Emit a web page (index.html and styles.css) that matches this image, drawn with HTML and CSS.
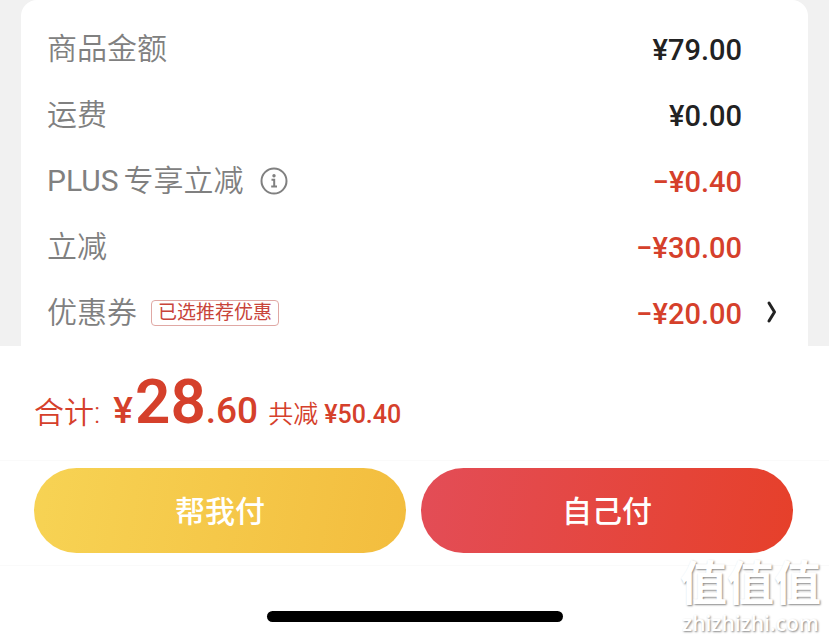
FILE: index.html
```html
<!DOCTYPE html>
<html lang="zh-CN">
<head>
  <meta charset="UTF-8">
  <meta name="viewport" content="width=device-width, initial-scale=1">
  <title>支付</title>
  <link rel="stylesheet" href="styles.css">
</head>
<body>
  <main class="detail">
    <dl class="card">
      <div class="row">
        <dt>商品金额</dt>
        <dd>¥79.00</dd>
      </div>
      <div class="row">
        <dt>运费</dt>
        <dd>¥0.00</dd>
      </div>
      <div class="row">
        <dt><span class="plus">PLUS</span>专享立减
          <button type="button" class="info" aria-label="说明">
            <svg width="28" height="28" viewBox="0 0 28 28" fill="none" stroke="#808080" stroke-width="2">
              <circle cx="14" cy="14" r="12.5"/>
              <circle cx="14" cy="8.8" r="1.7" fill="#808080" stroke="none"/>
              <path d="M11.5 12.8h2.7v6.5M11.2 19.4h5.8"/>
            </svg>
          </button>
        </dt>
        <dd class="minus">−¥0.40</dd>
      </div>
      <div class="row">
        <dt>立减</dt>
        <dd class="minus">−¥30.00</dd>
      </div>
      <div class="row">
        <dt>优惠券 <span class="tag">已选推荐优惠</span></dt>
        <dd class="minus">−¥20.00</dd>
        <dd class="more">
          <button type="button" aria-label="选择优惠券">
            <svg width="12" height="24" viewBox="0 0 12 24" fill="none" stroke="#222" stroke-width="3" stroke-linecap="round" stroke-linejoin="round">
              <path d="M3 3l5.5 9L3 21"/>
            </svg>
          </button>
        </dd>
      </div>
    </dl>
  </main>

  <footer class="bar">
    <p class="total">
      <span class="total-label">合计:</span>
      <span class="price">¥<strong>28</strong>.60</span>
      <span class="saved">共减</span>
      <span class="saved-num">¥50.40</span>
    </p>
    <div class="actions">
      <button type="button" class="btn btn-help">帮我付</button>
      <button type="button" class="btn btn-self">自己付</button>
    </div>
    <div class="home"></div>
  </footer>

  <div class="watermark">
    <div class="wm-name">值值值</div>
    <div class="wm-site">zhizhizhi.com</div>
  </div>
</body>
</html>
```
FILE: styles.css
```css
* { box-sizing: border-box; }
body { position: relative; margin: 0; min-height: 100vh; background: #fff; color: #222; font-family: Roboto, "Noto Sans CJK SC", sans-serif; }
button { padding: 0; border: none; background: none; font-family: inherit; cursor: pointer; }
svg { display: block; }

.detail { padding: 0 21px; background: #f1f1f1; }
.card { margin: 0; padding: 16px 26px 0; background: #fff; border-radius: 16px 16px 0 0; }
.row { position: relative; display: flex; align-items: center; justify-content: space-between; height: 66px; padding-right: 40px; }
dt { display: flex; align-items: center; color: #808080; font-size: 30px; font-weight: 350; line-height: 40px; }
dd { margin: 0; padding-top: 2px; font-size: 29px; font-weight: 500; line-height: 40px; }
.minus { color: #d5402b; }
.plus { margin-right: 5px; font-weight: 400; }
.info { margin-left: 16px; }
.tag { margin-left: 14px; padding: 0 6px; border: 1px solid #e0a8a4; border-radius: 4px; color: #c8443a; font-size: 19px; font-weight: 400; line-height: 24px; }
.more { position: absolute; right: 4px; }

.total { display: flex; align-items: baseline; height: 114px; margin: 0; padding: 20px 34px 0; color: #d5402b; line-height: 72px; white-space: nowrap; }
.total-label { font-size: 30px; font-weight: 350; }
.price { margin-left: 13px; font-size: 37px; font-weight: 500; }
.price strong { margin-left: 2px; font-size: 62px; font-weight: 600; }
.saved { margin-left: 10px; font-size: 25px; font-weight: 350; }
.saved-num { margin-left: 6px; font-size: 25px; font-weight: 500; }

.actions { display: flex; gap: 15px; padding: 7px 36px 12px 34px; border: solid #fafafa; border-width: 1px 0; }
.btn { flex: 1; height: 85px; padding-bottom: 4px; border-radius: 43px; color: #fff; font-size: 30px; font-weight: 500; }
.btn-help { background: linear-gradient(100deg, #f7d354, #f3bd3e); }
.btn-self { background: linear-gradient(100deg, #e34d57, #e6402a); }
.home { width: 296px; height: 11px; margin: 45px auto 0; border-radius: 6px; background: #000; }

/* site mark over the bottom right corner */
.watermark { position: absolute; right: 8px; bottom: 4px; color: #fff; text-align: center; text-shadow: 1px 1px 2px #888; }
.wm-name { font-size: 47px; font-weight: 700; line-height: 54px; }
.wm-site { font-family: "Open Sans", sans-serif; font-size: 21px; font-weight: 600; line-height: 24px; }
```
